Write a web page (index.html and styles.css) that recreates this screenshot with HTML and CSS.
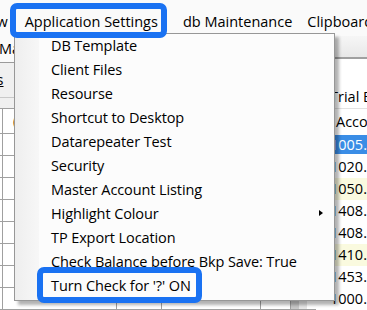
FILE: index.html
```html
<!DOCTYPE html>
<html lang="en">
<head>
    <meta charset="UTF-8">
    <meta name="viewport" content="width=device-width, initial-scale=1.0">
    <title>Application Settings</title>
    <link rel="stylesheet" href="styles.css">
</head>
<body>
    <div class="app">
        <div class="menubar">
            <span class="menu-item view">View</span>
            <span class="menu-item settings">Application Settings</span>
            <span class="menu-item maint">db Maintenance</span>
            <span class="menu-item">Clipboard</span>
        </div>

        <div class="workspace">
            <div class="left-pane">
                <div class="tabstrip"><span class="tab">Main</span></div>
                <div class="toolbar"><span class="tool-btn">Options</span></div>
                <div class="band"></div>
                <div class="grid">
                    <div class="grid-row head"><span></span><span class="code">(Code)</span><span></span><span></span><span></span><span></span></div>
                    <div class="grid-row"><span></span><span></span><span></span><span></span><span></span><span></span></div>
                    <div class="grid-row"><span></span><span></span><span></span><span></span><span></span><span></span></div>
                    <div class="grid-row"><span></span><span></span><span></span><span></span><span></span><span></span></div>
                    <div class="grid-row"><span></span><span></span><span></span><span></span><span></span><span></span></div>
                    <div class="grid-row"><span></span><span></span><span></span><span></span><span></span><span></span></div>
                    <div class="grid-row"><span></span><span></span><span></span><span></span><span></span><span></span></div>
                    <div class="grid-row"><span></span><span></span><span></span><span></span><span></span><span></span></div>
                    <div class="grid-row"><span></span><span></span><span></span><span></span><span></span><span></span></div>
                </div>
            </div>

            <div class="right-pane">
                <div class="pane-toolbar"></div>
                <div class="report-title">Trial Balance</div>
                <div class="report-head">Account</div>
                <div class="report-row selected">1005.00</div>
                <div class="report-row">1020.00</div>
                <div class="report-row alt">1050.00</div>
                <div class="report-row">1408.00</div>
                <div class="report-row">1408.00</div>
                <div class="report-row alt">1410.00</div>
                <div class="report-row">1453.00</div>
                <div class="report-row">1000.00</div>
            </div>
        </div>

        <!-- open dropdown of Application Settings -->
        <ul class="dropdown">
            <li>DB Template</li>
            <li>Client Files</li>
            <li>Resourse</li>
            <li>Shortcut to Desktop</li>
            <li>Datarepeater Test</li>
            <li>Security</li>
            <li>Master Account Listing</li>
            <li class="has-sub">Highlight Colour</li>
            <li>TP Export Location</li>
            <li>Check Balance before Bkp Save: True</li>
            <li>Turn Check for '?' ON</li>
        </ul>

        <!-- annotation boxes -->
        <div class="callout callout-menu"></div>
        <div class="callout callout-item"></div>
    </div>
</body>
</html>
```

FILE: styles.css
```css
* {
    margin: 0;
    padding: 0;
    box-sizing: border-box;
}

body {
    font-family: "Segoe UI", "Open Sans", sans-serif;
    font-size: 14.5px;
    color: #000;
    background: #fff;
    overflow: hidden;
}

.app {
    position: relative;
    width: 367px;
    height: 310px;
    overflow: hidden;
}

/* menu bar */
.menubar {
    display: flex;
    height: 36px;
    padding-top: 10px;
    background: #fafafa;
    white-space: nowrap;
}

.menu-item {
    line-height: 24px;
    padding: 0 12px;
}

.menu-item.view {
    margin-left: -36px;
    padding-right: 5px;
}

.menu-item.settings {
    padding-left: 12px;
    padding-right: 13px;
}

.menu-item.maint {
    padding-right: 3px;
}

/* background window */
.workspace {
    display: flex;
    height: 274px;
}

.left-pane {
    flex: none;
    width: 316px;
    display: flex;
    flex-direction: column;
}

.tabstrip {
    height: 27px;
    background: #fafafa;
    border-bottom: 1px solid #9a9a9a;
    line-height: 26px;
}

.tab {
    margin-left: -1px;
}

.toolbar {
    height: 38px;
    background: #f0f0f0;
    border-bottom: 1px solid #c9c9c9;
    line-height: 34px;
    white-space: nowrap;
}

.tool-btn {
    display: inline-block;
    margin-left: -50px;
    text-decoration: underline;
}

.band {
    height: 25px;
    background: #f0f0f0;
    border-bottom: 1px solid #a0a0a0;
}

.grid {
    flex: 1;
    background: #fff;
}

.grid-row {
    display: grid;
    grid-template-columns: 3px 114px 45px 99px 30px 6px;
    height: 22px;
    border-bottom: 1px solid #a0a0a0;
}

.grid-row.head {
    height: 25px;
}

.grid-row span {
    border-right: 1px solid #a0a0a0;
    overflow: hidden;
    white-space: nowrap;
}

.grid-row span:last-child {
    border-right: none;
    background: linear-gradient(to right, #c8c8c8 0 8px, #e6e6e6 8px);
    width: 16px;
}

.grid-row .code {
    padding-left: 10px;
    line-height: 24px;
}

.right-pane {
    flex: 1;
    min-width: 0;
    display: flex;
    flex-direction: column;
    white-space: nowrap;
    overflow: hidden;
}

.pane-toolbar {
    height: 30px;
    background: linear-gradient(#f6f6f6, #e8e8e8);
    border-bottom: 2px solid #a0a0a0;
}

.report-title {
    height: 55px;
    padding: 27px 0 0 14px;
    line-height: 22px;
    border-bottom: 1px solid #e2e2e2;
}

.report-head {
    height: 26px;
    padding: 1px 0 0 20px;
    line-height: 24px;
}

.report-row {
    height: 22px;
    padding-left: 14px;
    line-height: 22px;
}

.report-row.alt {
    background: #fafadf;
}

.report-row.selected {
    color: #fff;
    background: linear-gradient(#3a8de6, #3a8de6) 0 1px / 100% 19px no-repeat;
}

/* dropdown menu */
.dropdown {
    position: absolute;
    top: 33px;
    left: 14px;
    width: 321px;
    list-style: none;
    padding: 0 0 2px;
    border: 1px solid #979797;
    background: linear-gradient(to right, #eeeeee, #f7f7f7 24px, #fcfcfc 24px);
    box-shadow: 4px 4px 3px rgba(0, 0, 0, 0.3);
    white-space: nowrap;
    letter-spacing: -0.1px;
}

.dropdown li {
    position: relative;
    height: 24px;
    line-height: 24px;
    padding-left: 36px;
}

.dropdown li.has-sub::after {
    content: "";
    position: absolute;
    right: 11px;
    top: 8px;
    border-left: 4px solid #000;
    border-top: 3.5px solid transparent;
    border-bottom: 3.5px solid transparent;
}

/* blue annotation boxes */
.callout {
    position: absolute;
    border: 6px solid #1a72f2;
    border-radius: 7px;
}

.callout-menu {
    top: 3px;
    left: 10px;
    width: 157px;
    height: 35px;
}

.callout-item {
    top: 267px;
    left: 37px;
    width: 165px;
    height: 36px;
}
```
